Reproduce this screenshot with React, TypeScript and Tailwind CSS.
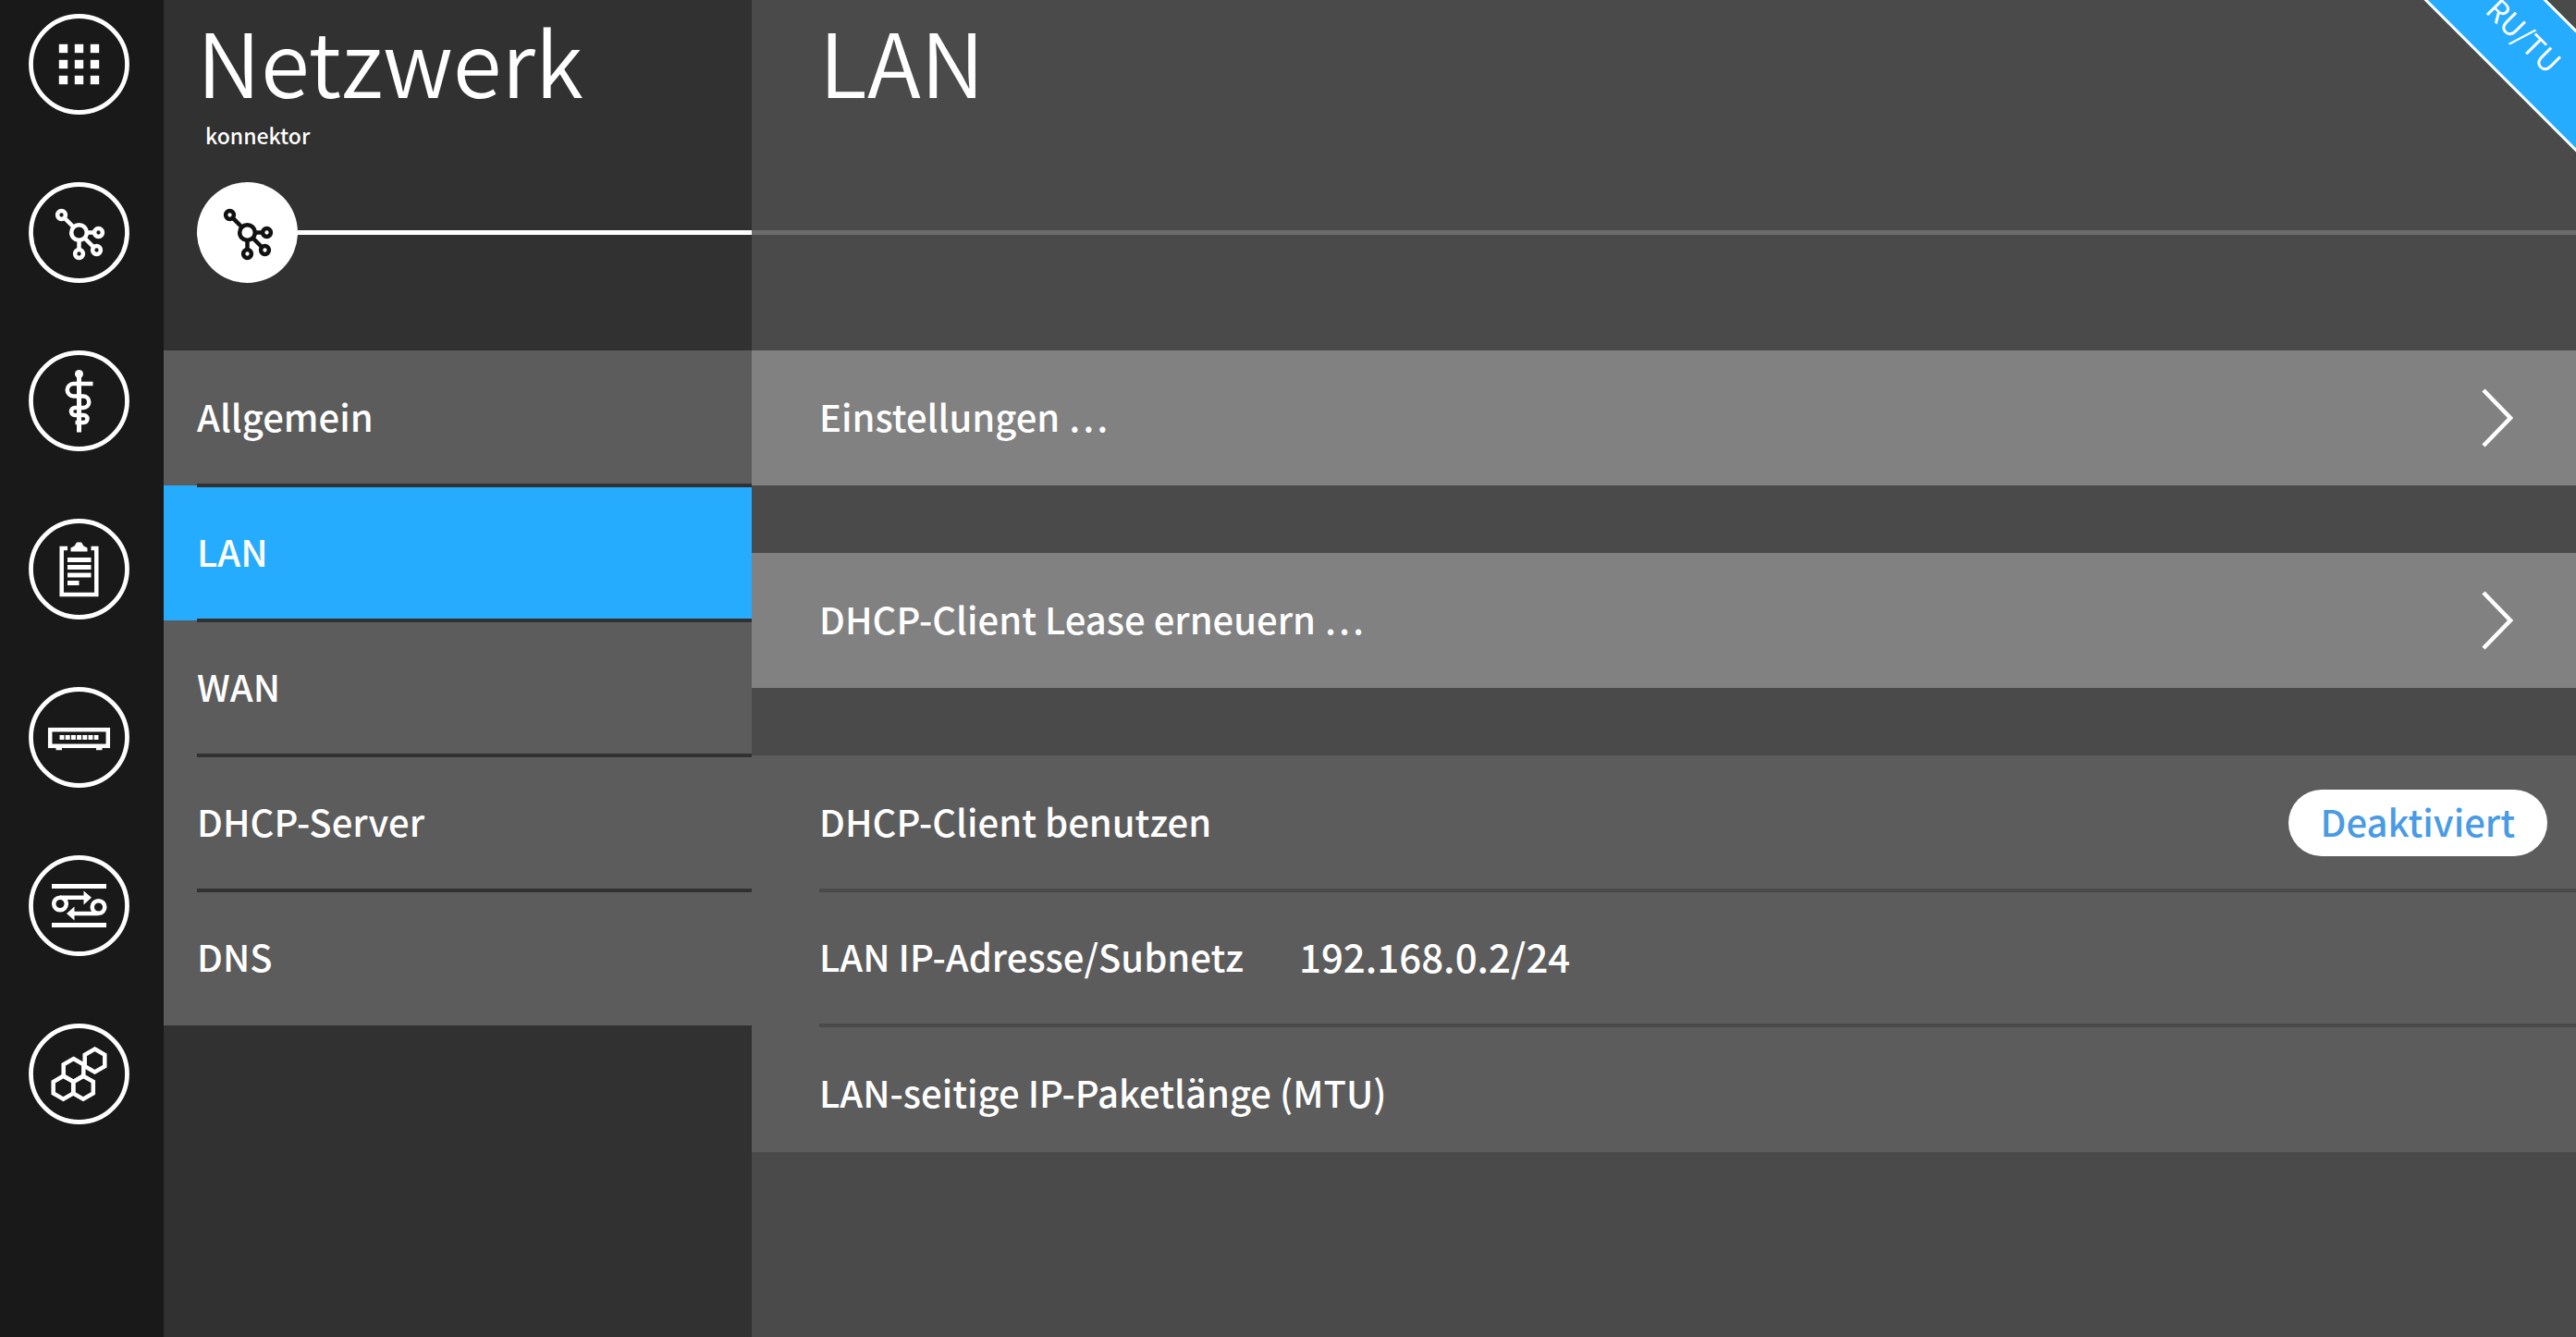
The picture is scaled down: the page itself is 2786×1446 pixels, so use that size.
import type { ReactNode } from "react";

function hexagon(cx: number, cy: number, r: number) {
  return [0, 1, 2, 3, 4, 5]
    .map((i) => {
      const a = (Math.PI / 3) * i - Math.PI / 2;
      return `${(cx + r * Math.cos(a)).toFixed(1)},${(cy + r * Math.sin(a)).toFixed(1)}`;
    })
    .join(" ");
}

function Glyph({ children }: { children: ReactNode }) {
  return (
    <svg
      viewBox="-54.5 -54.5 109 109"
      className="size-[109px] shrink-0"
      fill="none"
      stroke="currentColor"
      aria-hidden="true"
    >
      {children}
    </svg>
  );
}

function NetworkShape() {
  return (
    <g strokeWidth="4.5">
      <circle cx="0" cy="0" r="8.3" />
      <circle cx="-19" cy="-19" r="4.4" />
      <circle cx="21" cy="0" r="4.4" />
      <circle cx="19" cy="19" r="4.4" />
      <circle cx="0" cy="23" r="4.4" />
      <path d="M-15.5 -15.5 L-6 -6 M8 0 H17 M6 6 L15.5 15.5 M0 8 V19" />
    </g>
  );
}

const rail: { label: string; icon: ReactNode }[] = [
  {
    label: "Übersicht",
    icon: (
      <g fill="currentColor" stroke="none">
        {[-17, 0, 17].map((y) =>
          [-17, 0, 17].map((x) => (
            <rect key={`${x}${y}`} x={x - 4.7} y={y - 4.7} width="9.4" height="9.4" />
          )),
        )}
      </g>
    ),
  },
  { label: "Netzwerk", icon: <NetworkShape /> },
  {
    label: "Praxis",
    icon: (
      <g strokeWidth="4.5">
        <circle cx="0" cy="-29" r="4.5" fill="currentColor" stroke="none" />
        <path d="M0 -29 V34" strokeWidth="5" />
        <path d="M15 -18.5 H-6 A6.7 6.7 0 0 0 -6 -5 H4.5 A6.2 6.2 0 0 1 4.5 7.5 H-4.5 A4 4 0 0 0 -4.5 15.5 H5 A4 4 0 0 1 5 23.5 H-4" />
      </g>
    ),
  },
  {
    label: "Protokolle",
    icon: (
      <g strokeWidth="4.5">
        <path d="M-12.5 -22.5 H-18.8 V27.5 H18.8 V-22.5 H13" />
        <path
          d="M-9 -19 V-23 L-5 -25 L-2.5 -29 H2.5 L5 -25 L9 -23 V-19 Z"
          fill="currentColor"
          stroke="none"
        />
        <path d="M-12.5 -10 H13 M-12.5 -2 H13 M-12.5 6.5 H13 M-12.5 15 H0" strokeWidth="5" />
      </g>
    ),
  },
  {
    label: "System",
    icon: (
      <g strokeWidth="4.5">
        <rect x="-31.3" y="-8.3" width="62.6" height="17.6" />
        <path d="M-25 12.5 H-18.5 M18.5 12.5 H25" strokeWidth="2.5" />
        <path d="M-21 0 H21" strokeWidth="5" strokeDasharray="5 1.2" />
      </g>
    ),
  },
  {
    label: "VPN",
    icon: (
      <g strokeWidth="4.5">
        <path d="M-29.5 -21 H29.5 M-29.5 21 H29.5" strokeWidth="5" />
        <circle cx="-20.5" cy="-2" r="6.8" />
        <circle cx="21" cy="1.5" r="6.8" />
        <path d="M-20.5 -8.8 H7 M21 8.5 H-7" />
        <path d="M5 -16 L13.5 -8.8 L5 -1 Z M-5 16 L-13.5 8.5 L-5 1 Z" fill="currentColor" stroke="none" />
      </g>
    ),
  },
  {
    label: "Module",
    icon: (
      <g strokeWidth="4.5">
        <polygon points={hexagon(17, -14.5, 12.5)} />
        <polygon points={hexagon(-6, -4, 12.5)} />
        <polygon points={hexagon(-17, 14.7, 12.5)} />
        <polygon points={hexagon(4.5, 14.7, 12.5)} />
      </g>
    ),
  },
];

const menu = ["Allgemein", "LAN", "WAN", "DHCP-Server", "DNS"];

function ActionRow({ label }: { label: string }) {
  return (
    <button
      type="button"
      className="flex h-[146px] w-full items-center justify-between bg-[#818181] pr-[68px] pl-[73px] text-left"
    >
      <span className="pb-1">{label}</span>
      <svg
        viewBox="0 0 34 64"
        className="h-16 w-[34px]"
        fill="none"
        stroke="currentColor"
        strokeWidth="4.5"
        aria-hidden="true"
      >
        <path d="M2 2 L31 32 L2 62" />
      </svg>
    </button>
  );
}

export default function App() {
  return (
    <div className="flex min-h-screen overflow-hidden bg-[#4a4a4a] font-['Noto_Sans_CJK_SC','Noto_Sans',sans-serif] text-[40px] leading-[60px] font-medium text-white">
      <nav aria-label="Bereiche" className="flex w-[177px] shrink-0 flex-col gap-[73px] bg-[#191919] pt-[15px] pl-[31px]">
        {rail.map((item) => (
          <button
            key={item.label}
            type="button"
            aria-label={item.label}
            className="size-[109px] rounded-full"
          >
            <Glyph>
              <circle r="52" strokeWidth="4.8" />
              {item.icon}
            </Glyph>
          </button>
        ))}
      </nav>

      <aside className="w-[636px] shrink-0 bg-[#313131]">
        <header className="flex h-[379px] flex-col pl-9">
          <div className="h-[197px] pt-2">
            <h1 className="text-[96px] leading-[114px] font-[350]">Netzwerk</h1>
            <p className="pt-[6px] pl-[9px] text-[23px] leading-9">konnektor</p>
          </div>
          <div className="flex items-center">
            <div className="rounded-full bg-white text-[#111111]">
              <Glyph>
                <NetworkShape />
              </Glyph>
            </div>
            <div className="h-[5px] flex-1 bg-white" />
          </div>
        </header>
        <ul>
          {menu.map((label, i) => (
            <li key={label} className="relative">
              <a
                href={`#${label}`}
                aria-current={label === "LAN" ? "page" : undefined}
                className={`flex h-[146px] items-center pb-1 pl-9 ${label === "LAN" ? "bg-[#25acff]" : "bg-[#5c5c5c]"}`}
              >
                {label}
              </a>
              {i < menu.length - 1 && (
                <span className="absolute right-0 -bottom-[2px] left-9 z-10 h-1 bg-[#313131]" />
              )}
            </li>
          ))}
        </ul>
      </aside>

      <main className="relative min-w-0 flex-1">
        <header className="h-[379px]">
          <div className="h-[249px] pt-2 pl-[73px]">
            <h2 className="text-[96px] leading-[114px] font-[350]">LAN</h2>
          </div>
          <div className="h-[5px] bg-[#6c6c6c]" />
        </header>

        <div className="absolute top-0 right-0 size-[170px] overflow-hidden">
          <div className="absolute -top-[7px] -right-[142px] flex h-[94px] w-[400px] rotate-45 items-center justify-center border-y-[3px] border-white bg-[#25acff] pb-2 text-[32px] font-normal">
            RU/TU
          </div>
        </div>

        <div className="flex flex-col gap-[73px]">
          <ActionRow label="Einstellungen …" />
          <ActionRow label="DHCP-Client Lease erneuern …" />
          <dl className="bg-[#5c5c5c] pl-[73px]">
            <div className="relative flex h-[146px] items-center justify-between pr-[31px]">
              <dt className="pb-1">DHCP-Client benutzen</dt>
              <dd className="rounded-full bg-white px-[35px] pt-1 pb-2 text-[#4a9be5]">Deaktiviert</dd>
              <span className="absolute inset-x-0 -bottom-[2px] h-1 bg-[#4a4a4a]" />
            </div>
            <div className="relative flex h-[146px] items-center gap-[60px] pb-1">
              <dt>LAN IP-Adresse/Subnetz</dt>
              <dd className="text-[42px]">192.168.0.2/24</dd>
              <span className="absolute inset-x-0 -bottom-[2px] h-1 bg-[#4a4a4a]" />
            </div>
            <div className="flex h-[137px] items-center pt-[6px]">
              <dt>LAN-seitige IP-Paketlänge (MTU)</dt>
            </div>
          </dl>
        </div>
      </main>
    </div>
  );
}
